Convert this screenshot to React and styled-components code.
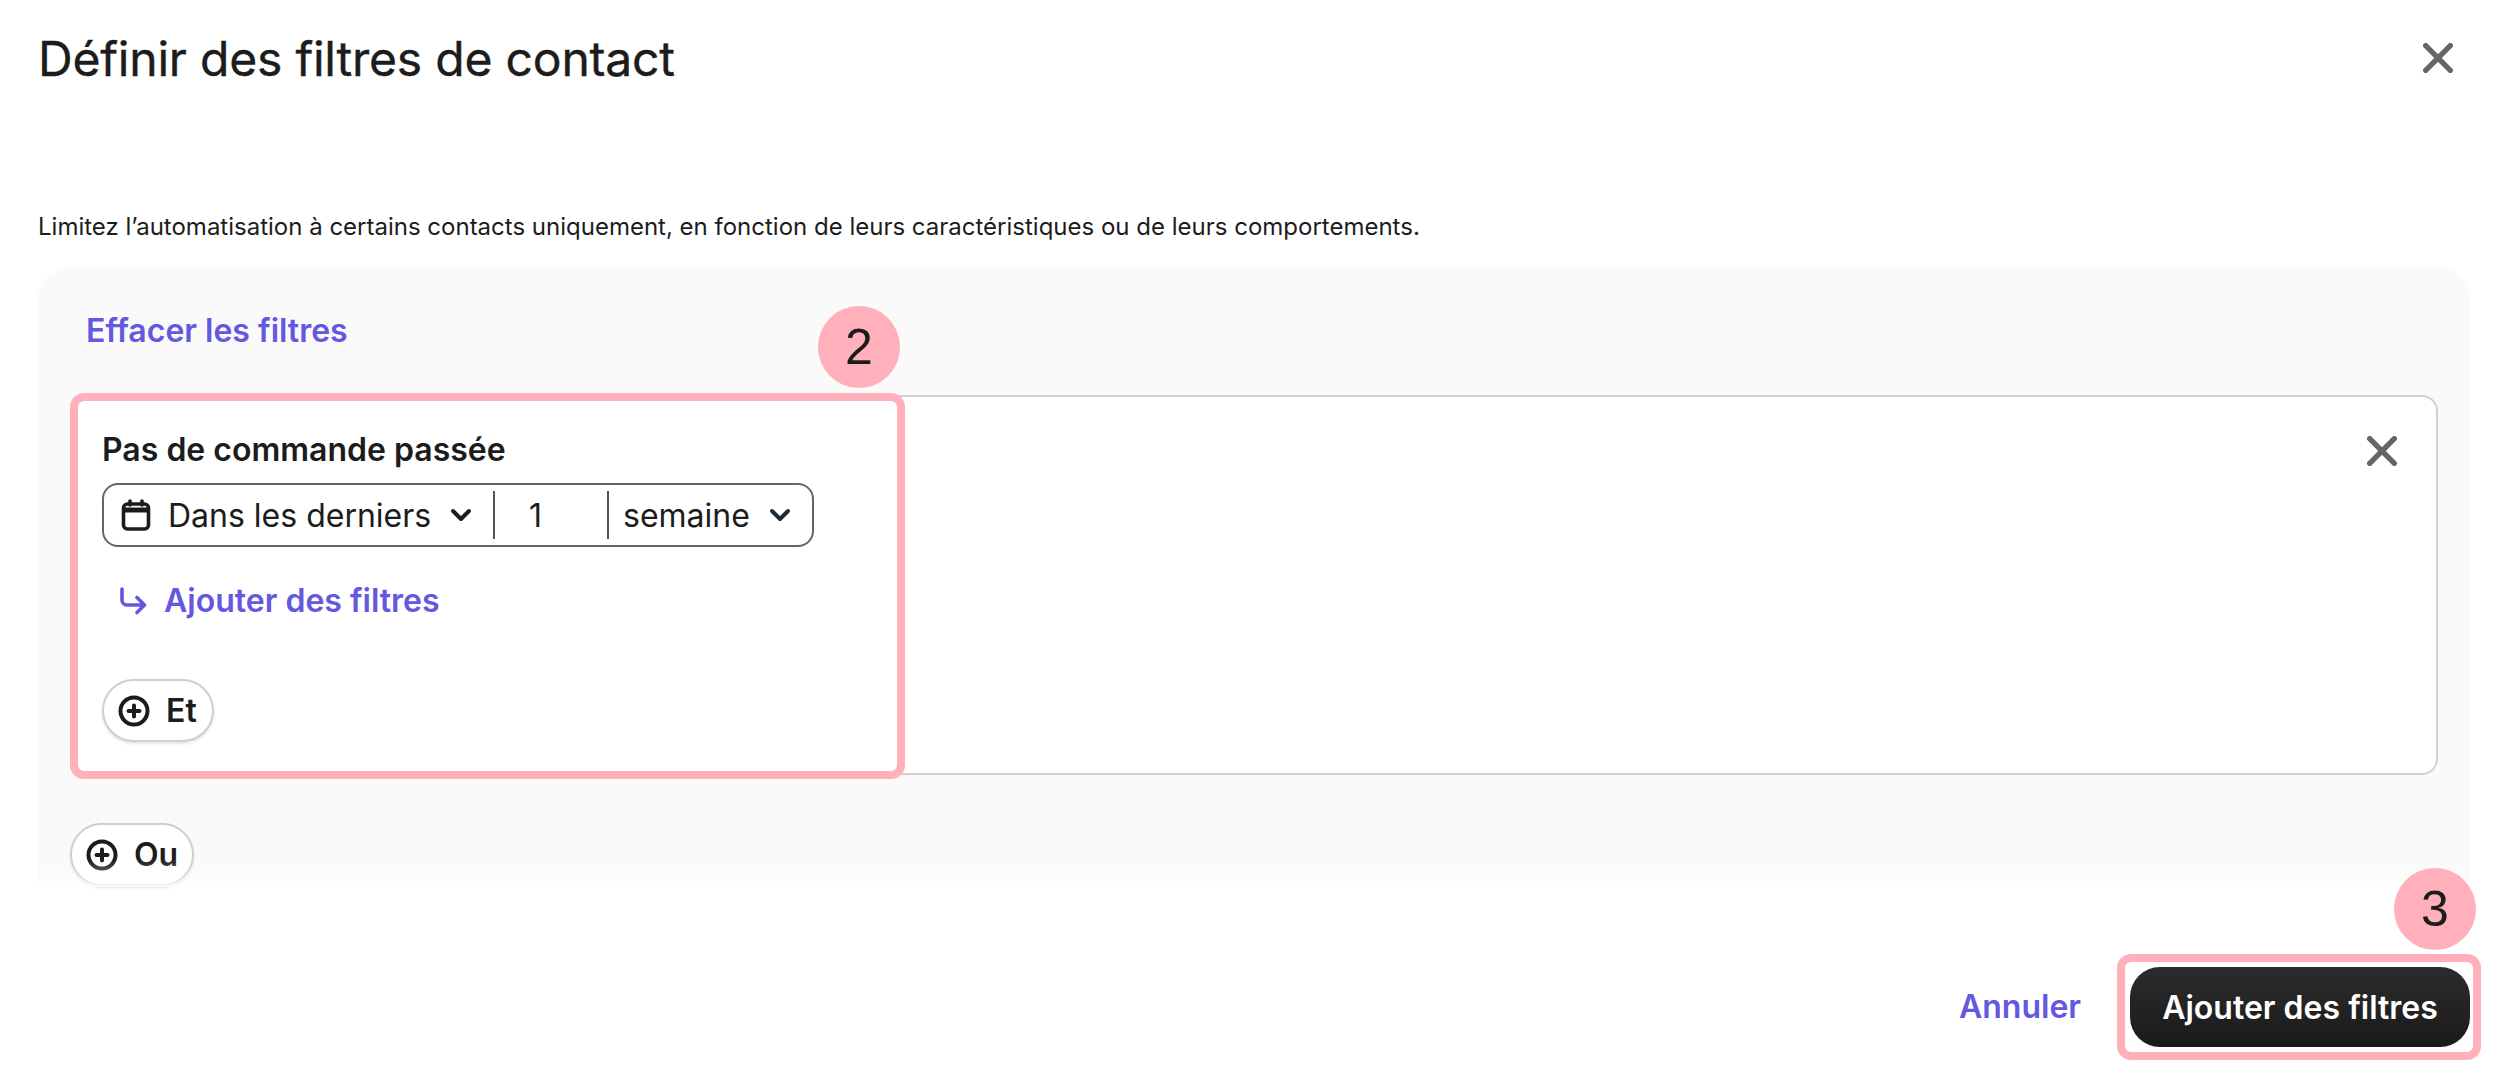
import React from "react";
import styled, { createGlobalStyle } from "styled-components";

const Global = createGlobalStyle`
  html, body { margin: 0; padding: 0; background: #fff; }
  body { font-family: Inter, "Liberation Sans", sans-serif; color: #1c1c1c; }
  * { box-sizing: border-box; }
`;

const Page = styled.div`
  width: 2504px;
  height: 1084px;
  padding: 0 34px 0 38px;
  display: flex;
  flex-direction: column;
  overflow: hidden;
`;
const Header = styled.header`
  height: 120px;
  padding-top: 30px;
  display: flex;
  justify-content: space-between;
  align-items: flex-start;
`;
const Title = styled.h1`
  margin: 0;
  font-size: 48px;
  line-height: 58px;
  font-weight: 400;
  letter-spacing: -0.2px;
  -webkit-text-stroke: 0.4px #1c1c1c;
`;
const IconButton = styled.button`
  border: 0;
  background: none;
  padding: 0;
  width: 30px;
  height: 30px;
  display: block;
  color: #666;
`;
const CloseTop = styled(IconButton)`
  margin: 13px 17px 0 0;
`;
const Desc = styled.p`
  margin: 0;
  height: 147px;
  padding-top: 92px;
  font-size: 24px;
  line-height: 30px;
  color: #1c1c1c;
`;
const Panel = styled.section`
  position: relative;
  height: 620px;
  background: #fafafa;
  border-radius: 32px 32px 0 0;
  padding: 44px 32px 0 32px;
  &::after {
    content: "";
    position: absolute;
    left: 0;
    right: 0;
    bottom: 0;
    height: 28px;
    background: linear-gradient(to bottom, rgba(255,255,255,0), rgba(255,255,255,.35) 65%, rgba(255,255,255,.85));
    pointer-events: none;
  }
`;
const TextLink = styled.a`
  display: block;
  color: #6457e0;
  font-weight: 600;
  font-size: 32px;
  line-height: 40px;
`;
const ClearLink = styled(TextLink)`
  margin-left: 16px;
  margin-bottom: 44px;
`;
const Card = styled.div`
  position: relative;
  height: 380px;
  background: #fff;
  border: 2px solid #d0d0d0;
  border-radius: 16px;
`;
const Highlight = styled.div`
  position: relative;
  border: 8px solid #ffb0ba;
  border-radius: 14px;
`;
const Condition = styled(Highlight)`
  margin: -4px 0 0 -2px;
  width: 835px;
  height: 386px;
  padding: 31px 0 0 24px;
`;
const Badge = styled.span`
  position: absolute;
  width: 82px;
  height: 82px;
  border-radius: 50%;
  background: #ffb0ba;
  color: #1c1c1c;
  display: flex;
  align-items: center;
  justify-content: center;
  font-family: "Liberation Sans", Arial, sans-serif;
  font-size: 50px;
  line-height: 1;
  top: ${p => p.$top}px;
  right: ${p => p.$right}px;
`;
const ConditionTitle = styled.div`
  font-size: 32px;
  line-height: 36px;
  font-weight: 600;
`;
const Select = styled.div`
  margin-top: 15px;
  width: 712px;
  height: 64px;
  border: 2px solid #666;
  border-radius: 16px;
  display: flex;
  align-items: center;
  font-size: 32px;
`;
const Segment = styled.div`
  display: flex;
  align-items: center;
  height: 100%;
  width: ${p => p.$w}px;
  padding-left: ${p => p.$pl}px;
`;
const Divider = styled.span`
  width: 2px;
  height: 48px;
  background: #555;
  flex: none;
`;
const Label = styled.span`
  margin-left: ${p => p.$ml || 0}px;
`;
const Chevron = styled.svg`
  margin-left: ${p => p.$ml}px;
  flex: none;
`;
const AddFilter = styled.div`
  margin: 34px 0 0 17px;
  display: flex;
  align-items: center;
  gap: 17px;
  color: #6457e0;
`;
const Pill = styled.button`
  display: flex;
  align-items: center;
  height: 63px;
  width: ${p => p.$w}px;
  padding: 0 0 0 14px;
  gap: ${p => p.$gap}px;
  border: 2px solid #cfcfcf;
  border-radius: 32px;
  background: #fff;
  box-shadow: 0 2px 3px rgba(0,0,0,.1);
  font-family: inherit;
  font-size: 32px;
  font-weight: 600;
  color: #1c1c1c;
`;
const EtPill = styled(Pill)`
  margin-top: 58px;
`;
const OuPill = styled(Pill)`
  margin-top: 48px;
`;
const CloseCard = styled(IconButton)`
  position: absolute;
  top: 39px;
  right: 39px;
`;
const Footer = styled.footer`
  padding-top: 67px;
  display: flex;
  justify-content: flex-end;
  align-items: center;
  gap: 36px;
`;
const PrimaryWrap = styled(Highlight)`
  margin-right: -11px;
  padding: 5px 3px 5px 5px;
`;
const Primary = styled.button`
  display: block;
  width: 340px;
  height: 80px;
  border: 0;
  border-radius: 30px;
  background: linear-gradient(to bottom, #2c2c2c, #1a1a1a);
  color: #fff;
  font-family: inherit;
  font-size: 32px;
  font-weight: 600;
`;

const X = () => (
  <svg width="30" height="30" viewBox="0 0 30 30" fill="none" stroke="currentColor" strokeWidth="5.4" strokeLinecap="round">
    <path d="M2.7 2.7 27.3 27.3M27.3 2.7 2.7 27.3" />
  </svg>
);
const ChevronDown = ({ ml, color = "#1c1c1c" }) => (
  <Chevron $ml={ml} width="22" height="14" viewBox="0 0 22 14" fill="none" stroke={color} strokeWidth="4" strokeLinecap="round" strokeLinejoin="round">
    <path d="M3 3 11 11 19 3" />
  </Chevron>
);
const Calendar = () => (
  <svg width="30" height="32" viewBox="0 0 30 32" fill="none" stroke="#1c1c1c" strokeWidth="3.6" strokeLinecap="round" strokeLinejoin="round">
    <rect x="2.5" y="5" width="25" height="25" rx="4" />
    <path d="M3 11H27" strokeWidth="5" strokeLinecap="butt" />
    <path d="M9 2V6M21 2V6" />
  </svg>
);
const PlusCircle = () => (
  <svg width="32" height="32" viewBox="0 0 32 32" fill="none" stroke="#1c1c1c" strokeWidth="4" strokeLinecap="round">
    <circle cx="16" cy="16" r="13.5" />
    <path d="M16 10.5V21.5M10.5 16H21.5" />
  </svg>
);
const CornerArrow = () => (
  <svg width="28" height="28" viewBox="0 0 28 28" fill="none" stroke="#6457e0" strokeWidth="3.6" strokeLinecap="round" strokeLinejoin="round">
    <path d="M3 2V13a5 5 0 0 0 5 5H25M18 10.5 25.5 18 18 25.5" />
  </svg>
);

export default function App() {
  return (
    <Page>
      <Global />
      <Header>
        <Title>Définir des filtres de contact</Title>
        <CloseTop aria-label="Fermer"><X /></CloseTop>
      </Header>
      <Desc>Limitez l’automatisation à certains contacts uniquement, en fonction de leurs caractéristiques ou de leurs comportements.</Desc>
      <Panel>
        <ClearLink>Effacer les filtres</ClearLink>
        <Card>
          <Condition>
            <Badge $top={-95} $right={-3}>2</Badge>
            <ConditionTitle>Pas de commande passée</ConditionTitle>
            <Select>
              <Segment $w={389} $pl={17}>
                <Calendar />
                <Label $ml={17}>Dans les derniers</Label>
                <ChevronDown ml={19} />
              </Segment>
              <Divider />
              <Segment $w={112} $pl={34}>1</Segment>
              <Divider />
              <Segment $w={199} $pl={14}>
                <Label>semaine</Label>
                <ChevronDown ml={19} color="#1f2a3a" />
              </Segment>
            </Select>
            <AddFilter>
              <CornerArrow />
              <TextLink>Ajouter des filtres</TextLink>
            </AddFilter>
            <EtPill $w={112} $gap={16}><PlusCircle /><span>Et</span></EtPill>
          </Condition>
          <CloseCard aria-label="Supprimer"><X /></CloseCard>
        </Card>
        <OuPill $w={124} $gap={16}><PlusCircle /><span>Ou</span></OuPill>
      </Panel>
      <Footer>
        <TextLink>Annuler</TextLink>
        <PrimaryWrap>
          <Badge $top={-94} $right={-3}>3</Badge>
          <Primary>Ajouter des filtres</Primary>
        </PrimaryWrap>
      </Footer>
    </Page>
  );
}
